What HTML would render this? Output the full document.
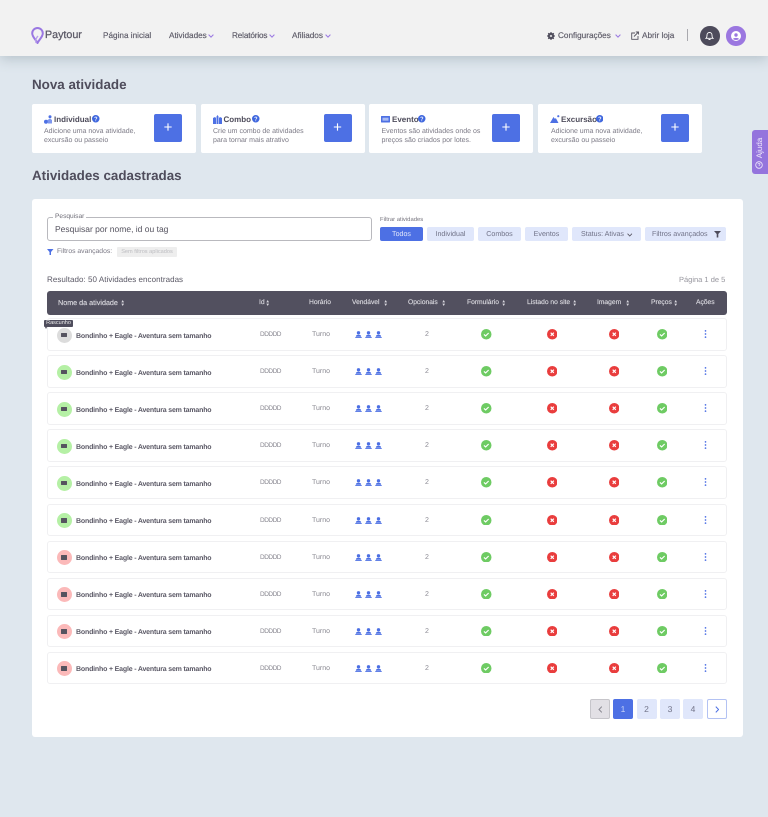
<!DOCTYPE html>
<html lang="pt-BR"><head><meta charset="utf-8"><title>Paytour</title>
<style>
*{box-sizing:border-box;margin:0;padding:0}
html,body{width:768px;height:817px;overflow:hidden;background:#dfe7ee;font-family:"Liberation Sans",sans-serif;text-rendering:geometricPrecision}
body{filter:blur(.35px)}
.a,.t,svg{position:absolute}
.t{white-space:nowrap;line-height:10px;height:10px}
.nav{font-size:8.2px;color:#5b5966;-webkit-text-stroke:.15px #5b5966}
.h1{font-size:13.4px;font-weight:bold;color:#4f4d5c;line-height:16px;height:16px}
.card{position:absolute;top:104px;width:164px;height:49px;background:#fff;border-radius:2px}
.plus{position:absolute;top:114px;width:28px;height:28px;background:#4d70e4;border-radius:2px;color:#fff;font-size:15px;line-height:27px;text-align:center}
.ct{top:114.5px;font-size:8px;font-weight:bold;color:#4f4d5c}
.cd{font-size:7px;color:#7b7985}
.fb{position:absolute;top:227px;height:14px;background:#e0e7fb;border-radius:2px;color:#6f7186;font-size:7.1px;line-height:14px;text-align:center}
.th{top:298px;color:#d9d8de;font-size:6.7px;-webkit-text-stroke:.15px #d9d8de}
.row{position:absolute;left:47px;width:680px;height:32.5px;background:#fff;border:1px solid #f0f0f2;border-radius:3px}
.row *{position:absolute}
.ic{left:8.5px;top:8.5px;width:15px;height:15px;border-radius:50%}
.ic i{left:4.5px;top:5px;width:6px;height:4.5px;background:#55535f;border-radius:.5px}
.n{left:28px;top:12.5px;font-size:7px;letter-spacing:-.18px;line-height:10px;font-weight:bold;color:#5b5966;white-space:nowrap}
.d{top:11px;font-size:7px;line-height:10px;color:#8a8992;white-space:nowrap}
.dd{left:212px;font-size:6.5px;letter-spacing:-.5px}
.pg{position:absolute;top:699px;width:20px;height:20px;background:#e0e7fb;border-radius:2px;font-size:8.5px;line-height:20px;text-align:center;color:#6f7186}
</style></head><body>
<svg width="0" height="0" style="position:absolute"><defs>
<symbol id="p" viewBox="0 0 8 8"><circle cx="4" cy="2.1" r="1.9" fill="#4d70e4"/><path d="M1 6.1C1 4.8 2.3 4.3 4 4.3s3 .5 3 1.8V6.5H1z" fill="#4d70e4"/><rect x=".3" y="6.9" width="7.4" height="1" fill="#4d70e4"/></symbol>
<symbol id="ok" viewBox="0 0 10 10"><circle cx="5" cy="5" r="5" fill="#6ecb63"/><path d="M2.8 5.2 4.4 6.6 7.3 3.8" fill="none" stroke="#fff" stroke-width="1.1"/></symbol>
<symbol id="no" viewBox="0 0 10 10"><circle cx="5" cy="5" r="5" fill="#e93d3d"/><path d="M3.5 3.5l3 3M6.5 3.5l-3 3" fill="none" stroke="#fff" stroke-width="1.1"/></symbol>
<symbol id="dots" viewBox="0 0 3 9"><circle cx="1.5" cy="1" r=".95" fill="#4d70e4"/><circle cx="1.5" cy="4.5" r=".95" fill="#4d70e4"/><circle cx="1.5" cy="8" r=".95" fill="#4d70e4"/></symbol>
<symbol id="q" viewBox="0 0 8 8"><circle cx="4" cy="4" r="4" fill="#3f67de"/><path d="M2.9 3.1C2.9 1.7 5.2 1.8 5.2 3.1 5.2 4 4 4 4 5" fill="none" stroke="#fff" stroke-width=".8"/><circle cx="4" cy="6.1" r=".5" fill="#fff"/></symbol>
<symbol id="cv" viewBox="0 0 6 4"><path d="M.6.6 3 3.1 5.4.6" fill="none" stroke="#9a78e2" stroke-width="1"/></symbol>
<symbol id="s" viewBox="0 0 4 7"><path d="M2 0 3.6 2.7H.4zM2 7 .4 4.3H3.6z" fill="#d9d8de"/></symbol>
</defs></svg>

<div class="a" style="left:0;top:0;width:768px;height:56px;background:#f2f2f2;box-shadow:0 3px 12px rgba(90,110,120,.3)"></div>
<svg style="left:31px;top:27px" width="13" height="17" viewBox="0 0 13 17"><path d="M6.5 16C4.8 12.5 1.2 10 1.2 6.3A5.3 5.3 0 0 1 11.8 6.3C11.8 10 8.2 12.5 6.5 16z" fill="none" stroke="#9a78e2" stroke-width="2"/><path d="M5 16C4 12 6 10 7 9" stroke="#b9a0ec" stroke-width="1.4" fill="none"/></svg>
<div class="t" style="left:45px;top:30px;font-size:10.7px;color:#5b5966;-webkit-text-stroke:.25px #5b5966">Paytour</div>
<div class="t nav" style="left:103px;top:30.5px">Página inicial</div>
<div class="t nav" style="left:169px;top:30.5px">Atividades</div><svg style="left:208px;top:34px" width="6" height="4"><use href="#cv"/></svg>
<div class="t nav" style="left:232px;top:30.5px;letter-spacing:-.15px">Relatórios</div><svg style="left:269px;top:34px" width="6" height="4"><use href="#cv"/></svg>
<div class="t nav" style="left:292px;top:30.5px">Afiliados</div><svg style="left:325px;top:34px" width="6" height="4"><use href="#cv"/></svg>
<svg style="left:547px;top:32px" width="8" height="8" viewBox="0 0 8 8"><circle cx="4" cy="4" r="2.5" fill="none" stroke="#4f4d5c" stroke-width="1.5"/><path d="M4 0v8M0 4h8M1.2 1.2l5.6 5.6M6.8 1.2 1.2 6.8" stroke="#4f4d5c" stroke-width="1.1"/><circle cx="4" cy="4" r="1" fill="#f2f2f2"/></svg>
<div class="t nav" style="left:558px;top:30.5px">Configurações</div><svg style="left:615px;top:34px" width="6" height="4"><use href="#cv"/></svg>
<svg style="left:631px;top:31px" width="8" height="9" viewBox="0 0 8 9"><path d="M4 2H.7V8.3H7V5" fill="none" stroke="#55535f" stroke-width=".9"/><path d="M3 5.5 7.3 1.200M4.800 1H7.500V3.500" fill="none" stroke="#55535f" stroke-width=".9"/></svg>
<div class="t nav" style="left:642px;top:30.5px">Abrir loja</div>
<div class="a" style="left:687px;top:29px;width:1px;height:12px;background:#a9a9ae"></div>
<div class="a" style="left:700px;top:26px;width:19.5px;height:19.5px;border-radius:50%;background:#4d4b5b"></div>
<svg style="left:705px;top:30.5px" width="9" height="10" viewBox="0 0 9 10"><path d="M1 7.3C2 6.5 2 5.5 2 4A2.5 2.5 0 0 1 7 4C7 5.5 7 6.5 8 7.3z" fill="none" stroke="#fff" stroke-width=".9"/><path d="M3.5 8.5H5.5" stroke="#fff"/></svg>
<div class="a" style="left:726px;top:26px;width:19.5px;height:19.5px;border-radius:50%;background:#9b77e0"></div>
<svg style="left:731px;top:30.5px" width="10" height="10" viewBox="0 0 10 10"><circle cx="5" cy="5" r="5" fill="#fff"/><circle cx="5" cy="4" r="1.7" fill="#9b77e0"/><path d="M2 8C2.5 6.5 7.5 6.5 8 8 6.5 9.3 3.5 9.3 2 8z" fill="#9b77e0"/></svg>

<div class="t h1" style="left:32px;top:77px">Nova atividade</div>
<div class="card" style="left:32px"></div><div class="card" style="left:200.5px"></div><div class="card" style="left:369px"></div><div class="card" style="left:538px"></div>
<div class="plus" style="left:154px">+</div><div class="plus" style="left:323.5px">+</div><div class="plus" style="left:492px">+</div><div class="plus" style="left:661px">+</div>

<svg style="left:44px;top:115px" width="9" height="9" viewBox="0 0 9 9"><circle cx="6" cy="1.7" r="1.5" fill="#4d70e4"/><circle cx="2" cy="6.8" r="2" fill="#4d70e4"/><path d="M3.5 5 6 3.5 8 5V8.5H4z" fill="#7e97ee"/></svg>
<div class="t ct" style="left:54px">Individual</div><svg style="left:92px;top:115px" width="7.5" height="7.5"><use href="#q"/></svg>
<div class="t cd" style="left:44px;top:126.5px">Adicione uma nova atividade,</div><div class="t cd" style="left:44px;top:135.5px">excursão ou passeio</div>

<svg style="left:213px;top:115px" width="9" height="9" viewBox="0 0 9 9"><path d="M0 3 2 2 3 3V9H0zM3.5 1.5 4.5 0 5.5 1.5V9h-2zM6 3 7 2 9 3V9H6z" fill="#4d70e4"/></svg>
<div class="t ct" style="left:223.5px">Combo</div><svg style="left:252px;top:115px" width="7.5" height="7.5"><use href="#q"/></svg>
<div class="t cd" style="left:213px;top:126.5px">Crie um combo de atividades</div><div class="t cd" style="left:213px;top:135.5px">para tornar mais atrativo</div>

<svg style="left:381px;top:116px" width="9" height="6.5" viewBox="0 0 9 6.5"><rect width="9" height="6.5" fill="#4d70e4" rx=".5"/><rect x="1.5" y="1.7" width="6" height="3" fill="#a9bbf3"/></svg>
<div class="t ct" style="left:392px">Evento</div><svg style="left:418px;top:115px" width="7.5" height="7.5"><use href="#q"/></svg>
<div class="t cd" style="left:381.5px;top:126.5px">Eventos são atividades onde os</div><div class="t cd" style="left:381.5px;top:135.5px">preços são criados por lotes.</div>

<svg style="left:550px;top:115px" width="9.5" height="8" viewBox="0 0 9.5 8"><path d="M0 8 3.5 2 5 4 5.8 3 8.5 8z" fill="#4d70e4"/><circle cx="8.3" cy="1.2" r="1.1" fill="#4d70e4"/></svg>
<div class="t ct" style="left:561px">Excursão</div><svg style="left:595.5px;top:115px" width="7.5" height="7.5"><use href="#q"/></svg>
<div class="t cd" style="left:551px;top:126.5px">Adicione uma nova atividade,</div><div class="t cd" style="left:551px;top:135.5px">excursão ou passeio</div>

<div class="a" style="left:752px;top:130px;width:16px;height:44px;background:#9474dd;border-radius:3px 0 0 3px"></div>
<div class="t" style="left:749px;top:143px;width:22px;text-align:center;color:#f0eafc;font-size:8px;transform:rotate(-90deg)">Ajuda</div>
<svg style="left:755px;top:160.5px" width="8" height="8" viewBox="0 0 8 8"><circle cx="4" cy="4" r="3.3" fill="none" stroke="#f0eafc" stroke-width=".8"/><path d="M3 3.2C3 2 5 2 5 3.2 5 4 4 4 4 5" fill="none" stroke="#f0eafc" stroke-width=".7"/></svg>

<div class="t h1" style="left:32px;top:167.5px">Atividades cadastradas</div>
<div class="a" style="left:32px;top:199px;width:711px;height:538px;background:#fff;border-radius:3px"></div>

<div class="a" style="left:47px;top:217px;width:325px;height:24px;border:1px solid #b9b9be;border-radius:3px"></div>
<div class="t" style="left:53px;top:212px;padding:0 2px;background:#fff;font-size:6.6px;color:#6e6d77">Pesquisar</div>
<div class="t" style="left:55px;top:224px;font-size:8.5px;color:#55535f">Pesquisar por nome, id ou tag</div>
<svg style="left:47px;top:249px" width="6.5" height="6" viewBox="0 0 6.5 6"><path d="M0 0H6.5L4 3V6H2.5V3z" fill="#4d70e4"/></svg>
<div class="t" style="left:57px;top:247px;font-size:6.8px;color:#7b7985">Filtros avançados:</div>
<div class="a" style="left:117px;top:247px;width:60px;height:10px;background:#eee;border-radius:1px;font-size:5.6px;line-height:10px;color:#bcbcc0;text-align:center">Sem filtros aplicados</div>
<div class="t" style="left:380px;top:214.5px;font-size:5.9px;color:#77757f">Filtrar atividades</div>
<div class="fb" style="left:380px;width:43px;background:#4d70e4;color:#e4e9fb">Todos</div>
<div class="fb" style="left:427px;width:47px">Individual</div>
<div class="fb" style="left:478px;width:43px">Combos</div>
<div class="fb" style="left:525px;width:43px">Eventos</div>
<div class="fb" style="left:572px;width:69px;text-align:left;padding-left:9px">Status: Ativas</div>
<svg style="left:627px;top:232.5px" width="5.5" height="4" viewBox="0 0 6 4"><path d="M.6.6 3 3.1 5.4.6" fill="none" stroke="#55535f" stroke-width=".9"/></svg>
<div class="fb" style="left:645px;width:81px;text-align:left;padding-left:7px">Filtros avançados</div>
<svg style="left:714px;top:231px" width="7" height="6.5" viewBox="0 0 7 6.5"><path d="M0 0H7L4.3 3V6.5H2.7V3z" fill="#4f4d5c"/></svg>

<div class="t" style="left:47px;top:274.5px;font-size:8px;color:#5b5966;letter-spacing:.05px">Resultado: 50 Atividades encontradas</div>
<div class="t" style="left:679px;top:274.5px;font-size:7.5px;color:#96959d">Página 1 de 5</div>

<div class="a" style="left:47px;top:291px;width:680px;height:24px;background:#52505f;border-radius:3px"></div>
<div class="t th" style="left:58px;font-size:7.2px">Nome da atividade</div><svg style="left:120.5px;top:300px" width="3.4" height="6"><use href="#s"/></svg>
<div class="t th" style="left:259px">Id</div><svg style="left:266px;top:300px" width="3.4" height="6"><use href="#s"/></svg>
<div class="t th" style="left:309px">Horário</div>
<div class="t th" style="left:352px">Vendável</div><svg style="left:383.5px;top:300px" width="3.4" height="6"><use href="#s"/></svg>
<div class="t th" style="left:408px">Opcionais</div><svg style="left:441.5px;top:300px" width="3.4" height="6"><use href="#s"/></svg>
<div class="t th" style="left:467px">Formulário</div><svg style="left:501.5px;top:300px" width="3.4" height="6"><use href="#s"/></svg>
<div class="t th" style="left:527px">Listado no site</div><svg style="left:572.5px;top:300px" width="3.4" height="6"><use href="#s"/></svg>
<div class="t th" style="left:597px">Imagem</div><svg style="left:625.5px;top:300px" width="3.4" height="6"><use href="#s"/></svg>
<div class="t th" style="left:651px">Preços</div><svg style="left:673.5px;top:300px" width="3.4" height="6"><use href="#s"/></svg>
<div class="t th" style="left:696px">Ações</div>

<div class="row" style="top:318px"><div class="ic" style="background:#dcdcdc"><i></i></div><div class="n">Bondinho + Eagle - Aventura sem tamanho</div><div class="d dd">DDDDD</div><div class="d" style="left:264px">Turno</div><svg style="left:307px;top:12px" width="7" height="7"><use href="#p"/></svg><svg style="left:317px;top:12px" width="7" height="7"><use href="#p"/></svg><svg style="left:327px;top:12px" width="7" height="7"><use href="#p"/></svg><div class="d" style="left:377px">2</div><svg style="left:433px;top:10px" width="10.5" height="10.5"><use href="#ok"/></svg><svg style="left:498.5px;top:10px" width="10.5" height="10.5"><use href="#no"/></svg><svg style="left:560.5px;top:10px" width="10.5" height="10.5"><use href="#no"/></svg><svg style="left:608.5px;top:10px" width="10.5" height="10.5"><use href="#ok"/></svg><svg style="left:656px;top:11px" width="3" height="8"><use href="#dots"/></svg></div>
<div class="row" style="top:355.1px"><div class="ic" style="background:#b5f0a5"><i></i></div><div class="n">Bondinho + Eagle - Aventura sem tamanho</div><div class="d dd">DDDDD</div><div class="d" style="left:264px">Turno</div><svg style="left:307px;top:12px" width="7" height="7"><use href="#p"/></svg><svg style="left:317px;top:12px" width="7" height="7"><use href="#p"/></svg><svg style="left:327px;top:12px" width="7" height="7"><use href="#p"/></svg><div class="d" style="left:377px">2</div><svg style="left:433px;top:10px" width="10.5" height="10.5"><use href="#ok"/></svg><svg style="left:498.5px;top:10px" width="10.5" height="10.5"><use href="#no"/></svg><svg style="left:560.5px;top:10px" width="10.5" height="10.5"><use href="#no"/></svg><svg style="left:608.5px;top:10px" width="10.5" height="10.5"><use href="#ok"/></svg><svg style="left:656px;top:11px" width="3" height="8"><use href="#dots"/></svg></div>
<div class="row" style="top:392.2px"><div class="ic" style="background:#b5f0a5"><i></i></div><div class="n">Bondinho + Eagle - Aventura sem tamanho</div><div class="d dd">DDDDD</div><div class="d" style="left:264px">Turno</div><svg style="left:307px;top:12px" width="7" height="7"><use href="#p"/></svg><svg style="left:317px;top:12px" width="7" height="7"><use href="#p"/></svg><svg style="left:327px;top:12px" width="7" height="7"><use href="#p"/></svg><div class="d" style="left:377px">2</div><svg style="left:433px;top:10px" width="10.5" height="10.5"><use href="#ok"/></svg><svg style="left:498.5px;top:10px" width="10.5" height="10.5"><use href="#no"/></svg><svg style="left:560.5px;top:10px" width="10.5" height="10.5"><use href="#no"/></svg><svg style="left:608.5px;top:10px" width="10.5" height="10.5"><use href="#ok"/></svg><svg style="left:656px;top:11px" width="3" height="8"><use href="#dots"/></svg></div>
<div class="row" style="top:429.3px"><div class="ic" style="background:#b5f0a5"><i></i></div><div class="n">Bondinho + Eagle - Aventura sem tamanho</div><div class="d dd">DDDDD</div><div class="d" style="left:264px">Turno</div><svg style="left:307px;top:12px" width="7" height="7"><use href="#p"/></svg><svg style="left:317px;top:12px" width="7" height="7"><use href="#p"/></svg><svg style="left:327px;top:12px" width="7" height="7"><use href="#p"/></svg><div class="d" style="left:377px">2</div><svg style="left:433px;top:10px" width="10.5" height="10.5"><use href="#ok"/></svg><svg style="left:498.5px;top:10px" width="10.5" height="10.5"><use href="#no"/></svg><svg style="left:560.5px;top:10px" width="10.5" height="10.5"><use href="#no"/></svg><svg style="left:608.5px;top:10px" width="10.5" height="10.5"><use href="#ok"/></svg><svg style="left:656px;top:11px" width="3" height="8"><use href="#dots"/></svg></div>
<div class="row" style="top:466.4px"><div class="ic" style="background:#b5f0a5"><i></i></div><div class="n">Bondinho + Eagle - Aventura sem tamanho</div><div class="d dd">DDDDD</div><div class="d" style="left:264px">Turno</div><svg style="left:307px;top:12px" width="7" height="7"><use href="#p"/></svg><svg style="left:317px;top:12px" width="7" height="7"><use href="#p"/></svg><svg style="left:327px;top:12px" width="7" height="7"><use href="#p"/></svg><div class="d" style="left:377px">2</div><svg style="left:433px;top:10px" width="10.5" height="10.5"><use href="#ok"/></svg><svg style="left:498.5px;top:10px" width="10.5" height="10.5"><use href="#no"/></svg><svg style="left:560.5px;top:10px" width="10.5" height="10.5"><use href="#no"/></svg><svg style="left:608.5px;top:10px" width="10.5" height="10.5"><use href="#ok"/></svg><svg style="left:656px;top:11px" width="3" height="8"><use href="#dots"/></svg></div>
<div class="row" style="top:503.5px"><div class="ic" style="background:#b5f0a5"><i></i></div><div class="n">Bondinho + Eagle - Aventura sem tamanho</div><div class="d dd">DDDDD</div><div class="d" style="left:264px">Turno</div><svg style="left:307px;top:12px" width="7" height="7"><use href="#p"/></svg><svg style="left:317px;top:12px" width="7" height="7"><use href="#p"/></svg><svg style="left:327px;top:12px" width="7" height="7"><use href="#p"/></svg><div class="d" style="left:377px">2</div><svg style="left:433px;top:10px" width="10.5" height="10.5"><use href="#ok"/></svg><svg style="left:498.5px;top:10px" width="10.5" height="10.5"><use href="#no"/></svg><svg style="left:560.5px;top:10px" width="10.5" height="10.5"><use href="#no"/></svg><svg style="left:608.5px;top:10px" width="10.5" height="10.5"><use href="#ok"/></svg><svg style="left:656px;top:11px" width="3" height="8"><use href="#dots"/></svg></div>
<div class="row" style="top:540.6px"><div class="ic" style="background:#fbb9b9"><i></i></div><div class="n">Bondinho + Eagle - Aventura sem tamanho</div><div class="d dd">DDDDD</div><div class="d" style="left:264px">Turno</div><svg style="left:307px;top:12px" width="7" height="7"><use href="#p"/></svg><svg style="left:317px;top:12px" width="7" height="7"><use href="#p"/></svg><svg style="left:327px;top:12px" width="7" height="7"><use href="#p"/></svg><div class="d" style="left:377px">2</div><svg style="left:433px;top:10px" width="10.5" height="10.5"><use href="#ok"/></svg><svg style="left:498.5px;top:10px" width="10.5" height="10.5"><use href="#no"/></svg><svg style="left:560.5px;top:10px" width="10.5" height="10.5"><use href="#no"/></svg><svg style="left:608.5px;top:10px" width="10.5" height="10.5"><use href="#ok"/></svg><svg style="left:656px;top:11px" width="3" height="8"><use href="#dots"/></svg></div>
<div class="row" style="top:577.7px"><div class="ic" style="background:#fbb9b9"><i></i></div><div class="n">Bondinho + Eagle - Aventura sem tamanho</div><div class="d dd">DDDDD</div><div class="d" style="left:264px">Turno</div><svg style="left:307px;top:12px" width="7" height="7"><use href="#p"/></svg><svg style="left:317px;top:12px" width="7" height="7"><use href="#p"/></svg><svg style="left:327px;top:12px" width="7" height="7"><use href="#p"/></svg><div class="d" style="left:377px">2</div><svg style="left:433px;top:10px" width="10.5" height="10.5"><use href="#ok"/></svg><svg style="left:498.5px;top:10px" width="10.5" height="10.5"><use href="#no"/></svg><svg style="left:560.5px;top:10px" width="10.5" height="10.5"><use href="#no"/></svg><svg style="left:608.5px;top:10px" width="10.5" height="10.5"><use href="#ok"/></svg><svg style="left:656px;top:11px" width="3" height="8"><use href="#dots"/></svg></div>
<div class="row" style="top:614.8px"><div class="ic" style="background:#fbb9b9"><i></i></div><div class="n">Bondinho + Eagle - Aventura sem tamanho</div><div class="d dd">DDDDD</div><div class="d" style="left:264px">Turno</div><svg style="left:307px;top:12px" width="7" height="7"><use href="#p"/></svg><svg style="left:317px;top:12px" width="7" height="7"><use href="#p"/></svg><svg style="left:327px;top:12px" width="7" height="7"><use href="#p"/></svg><div class="d" style="left:377px">2</div><svg style="left:433px;top:10px" width="10.5" height="10.5"><use href="#ok"/></svg><svg style="left:498.5px;top:10px" width="10.5" height="10.5"><use href="#no"/></svg><svg style="left:560.5px;top:10px" width="10.5" height="10.5"><use href="#no"/></svg><svg style="left:608.5px;top:10px" width="10.5" height="10.5"><use href="#ok"/></svg><svg style="left:656px;top:11px" width="3" height="8"><use href="#dots"/></svg></div>
<div class="row" style="top:651.9px"><div class="ic" style="background:#fbb9b9"><i></i></div><div class="n">Bondinho + Eagle - Aventura sem tamanho</div><div class="d dd">DDDDD</div><div class="d" style="left:264px">Turno</div><svg style="left:307px;top:12px" width="7" height="7"><use href="#p"/></svg><svg style="left:317px;top:12px" width="7" height="7"><use href="#p"/></svg><svg style="left:327px;top:12px" width="7" height="7"><use href="#p"/></svg><div class="d" style="left:377px">2</div><svg style="left:433px;top:10px" width="10.5" height="10.5"><use href="#ok"/></svg><svg style="left:498.5px;top:10px" width="10.5" height="10.5"><use href="#no"/></svg><svg style="left:560.5px;top:10px" width="10.5" height="10.5"><use href="#no"/></svg><svg style="left:608.5px;top:10px" width="10.5" height="10.5"><use href="#ok"/></svg><svg style="left:656px;top:11px" width="3" height="8"><use href="#dots"/></svg></div>

<div class="a" style="left:44px;top:320px;width:29px;height:7px;background:#4f4d5d;border-radius:1px;color:#eee;font-size:5.5px;line-height:7px;text-align:center">Rascunho</div>
<div class="a" style="left:45px;top:327px;width:0;height:0;border-left:1.5px solid transparent;border-right:1.5px solid transparent;border-top:2px solid #4f4d5d"></div>

<div class="pg" style="left:590px;background:#e2e0e5;border:1px solid #c6c5ca"></div>
<svg style="left:597.5px;top:705.5px" width="4.5" height="7" viewBox="0 0 4.5 7"><path d="M3.8.6 1 3.5 3.8 6.4" fill="none" stroke="#8a8992" stroke-width="1"/></svg>
<div class="pg" style="left:613px;background:#4d70e4;color:#c9d4f7">1</div>
<div class="pg" style="left:636.5px">2</div>
<div class="pg" style="left:660px">3</div>
<div class="pg" style="left:683px">4</div>
<div class="pg" style="left:707px;background:#fff;border:1px solid #b3c2f3"></div>
<svg style="left:714.5px;top:705.5px" width="4.5" height="7" viewBox="0 0 4.5 7"><path d="M.8.6 3.6 3.5 .8 6.4" fill="none" stroke="#4d70e4" stroke-width="1"/></svg>
</body></html>
